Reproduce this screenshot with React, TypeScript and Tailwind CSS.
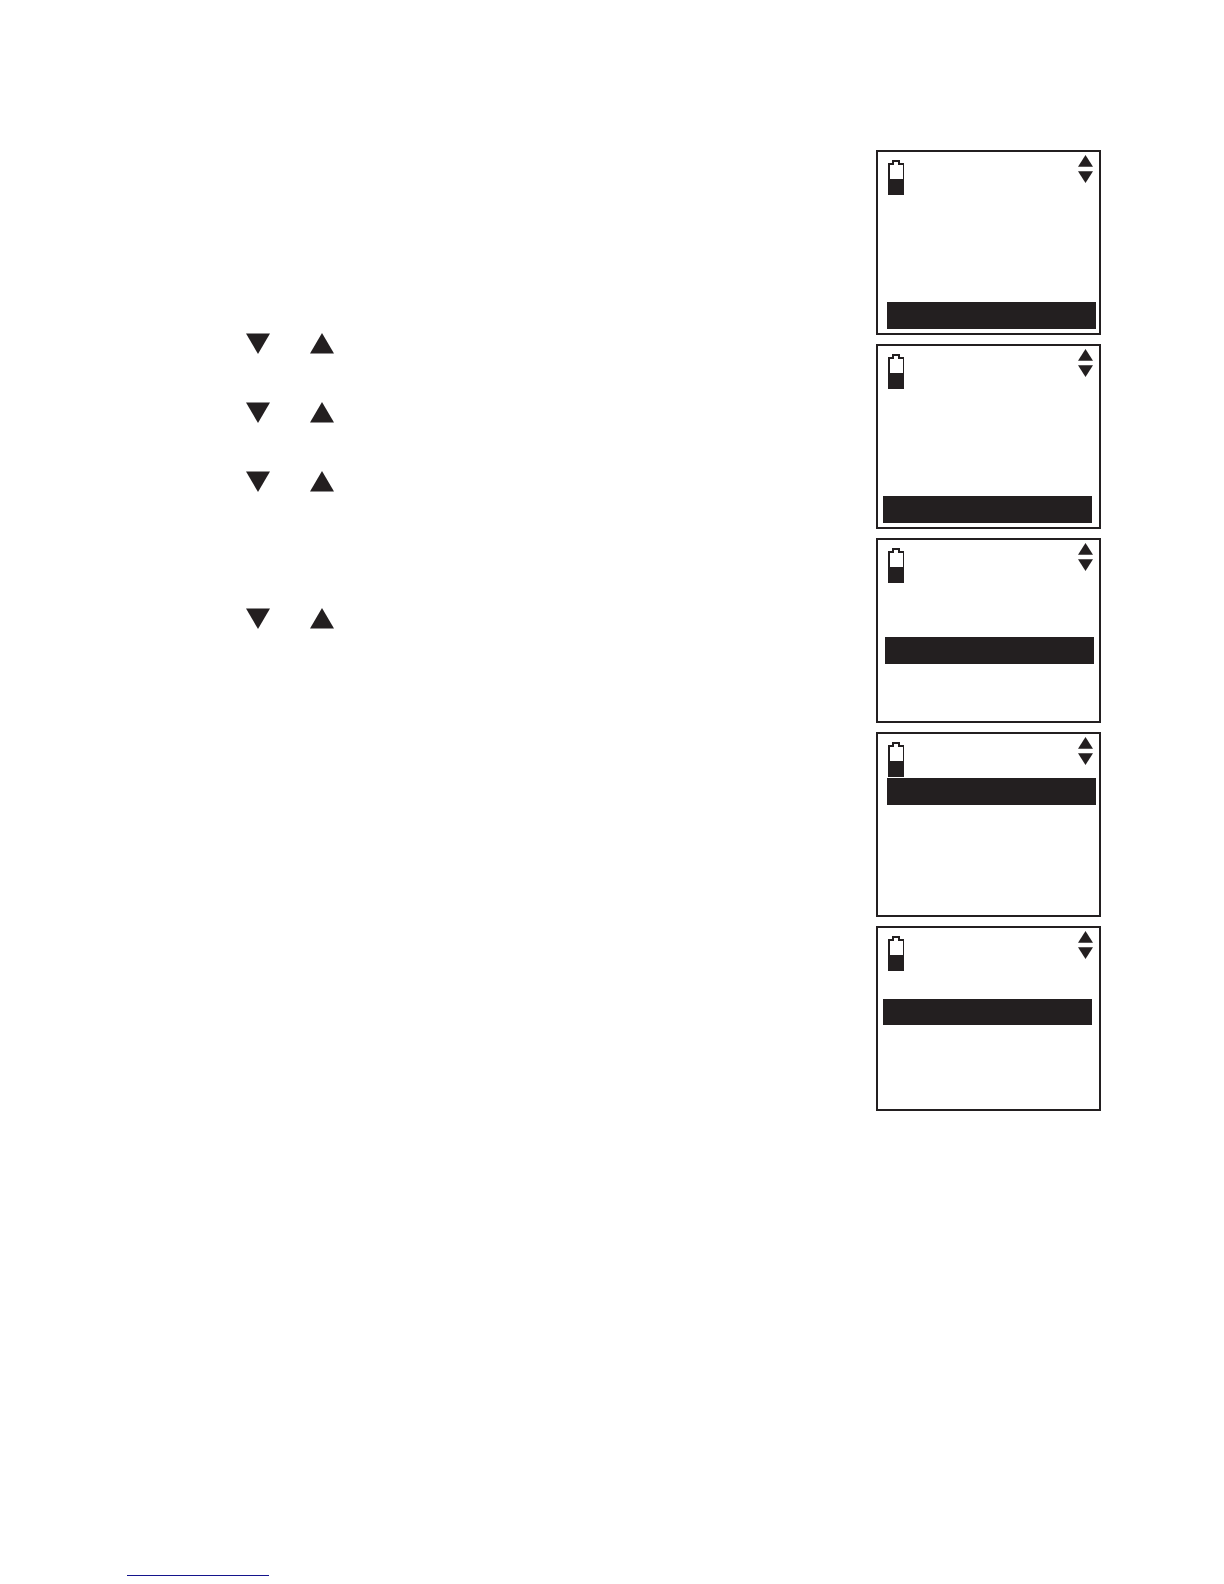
import { clsx } from "clsx";

interface Screen {
  id: string;
  selectedRow: number;
  rowInset: string;
}

const ROWS = [0, 1, 2, 3, 4];

const SCREENS: Screen[] = [
  { id: "first", selectedRow: 4, rowInset: "pl-[9px] pr-[3px]" },
  { id: "second", selectedRow: 4, rowInset: "pl-[5px] pr-[7px]" },
  { id: "third", selectedRow: 2, rowInset: "pl-[7px] pr-[5px]" },
  { id: "fourth", selectedRow: 0, rowInset: "pl-[9px] pr-[3px]" },
  { id: "fifth", selectedRow: 1, rowInset: "pl-[5px] pr-[7px]" },
];

const Triangle = ({ up = false, className }: { up?: boolean; className: string }) => (
  <svg
    aria-hidden="true"
    viewBox="0 0 24 21"
    preserveAspectRatio="none"
    className={clsx("block fill-current", className)}
  >
    <path d={up ? "M12 0 24 20.5H0Z" : "M0 0.5H24L12 21Z"} />
  </svg>
);

const Battery = () => (
  <svg
    aria-hidden="true"
    viewBox="0 0 16 35"
    shapeRendering="crispEdges"
    className="block h-[35px] w-4 fill-current"
  >
    <path
      fillRule="evenodd"
      d="M4 0H12V3H16V35H0V3H4ZM6 2V5H2V19H15V5H10V2Z"
    />
  </svg>
);

/** One handset display: status icons on top, five menu rows below. */
const HandsetScreen = ({ selectedRow, rowInset }: Omit<Screen, "id">) => (
  <div className="flex h-[185px] flex-col border-2 border-current pb-1">
    <div className="flex h-11 shrink-0 items-start justify-between pr-[6px] pl-[10px]">
      <div className="pt-2">
        <Battery />
      </div>
      <div className="flex flex-col gap-1 pt-[3px]">
        <Triangle up className="h-3 w-[15px]" />
        <Triangle className="h-3 w-[15px]" />
      </div>
    </div>
    <div className={clsx("grid flex-1 grid-rows-5", rowInset)}>
      {ROWS.map((row) => (
        <div key={row} className={clsx(row === selectedRow && "bg-current")} />
      ))}
    </div>
  </div>
);

/** Down and up keys that belong to one step. */
const StepKeys = ({ className }: { className?: string }) => (
  <li className={clsx("flex gap-10", className)}>
    <Triangle className="h-[21px] w-6" />
    <Triangle up className="h-[21px] w-6" />
  </li>
);

export default function App() {
  return (
    <main className="flex min-h-screen flex-col justify-between bg-white pr-[123px] pb-2 pl-[127px] text-[#231f20]">
      <div className="flex items-start justify-between pt-[150px]">
        <ol className="flex flex-col gap-12 pt-[183px] pl-[119px]">
          <StepKeys />
          <StepKeys />
          <StepKeys />
          <StepKeys className="pt-[68px]" />
        </ol>

        <div className="flex w-[225px] shrink-0 flex-col gap-[9px]">
          {SCREENS.map(({ id, selectedRow, rowInset }) => (
            <HandsetScreen key={id} selectedRow={selectedRow} rowInset={rowInset} />
          ))}
        </div>
      </div>

      <hr className="h-px w-[142px] border-0 bg-[#14148c]" />
    </main>
  );
}
